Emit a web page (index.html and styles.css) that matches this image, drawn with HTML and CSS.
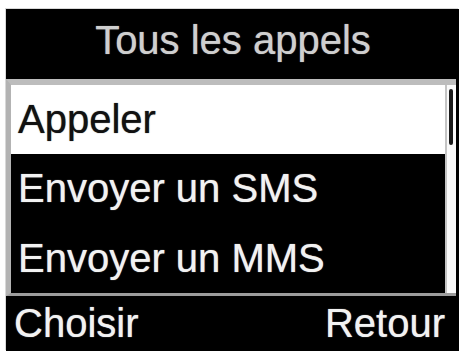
FILE: index.html
```html
<!DOCTYPE html>
<html lang="fr">
<head>
<meta charset="utf-8">
<title>Tous les appels</title>
<link rel="stylesheet" href="styles.css">
</head>
<body>
<div class="screen">
  <div class="header">Tous les appels</div>
  <div class="frame">
    <ul class="menu">
      <li class="item selected">Appeler</li>
      <li class="item">Envoyer un SMS</li>
      <li class="item">Envoyer un MMS</li>
    </ul>
    <div class="scrollbar"><div class="thumb"></div></div>
  </div>
  <div class="softkeys">
    <span class="key">Choisir</span>
    <span class="key">Retour</span>
  </div>
</div>
</body>
</html>
```

FILE: styles.css
```css
html, body {
  margin: 0;
  padding: 0;
  background: #ffffff;
}

body {
  width: 459px;
  height: 351px;
  overflow: hidden;
  font-family: "Liberation Sans", Arial, sans-serif;
}

.screen {
  margin: 9px 0 0 6px;
  height: 342px;
  background: #000;
  display: flex;
  flex-direction: column;
  box-shadow: -1px -1px 0 #d8d8d8;
}

.header {
  height: 70px;
  box-sizing: border-box;
  padding-bottom: 8px;
  line-height: 62px;
  text-align: center;
  color: #cfcfcf;
  font-size: 40px;
  padding-left: 1px;
  text-shadow: 0 0 1px #9a9a9a;
}

.frame {
  display: flex;
  height: 217px;
  box-sizing: border-box;
  margin-right: 3px;
  border-top: 6px solid #bdbdbd;
  border-left: 5px solid #b3b3b3;
  border-bottom: 3px solid #9c9c9c;
}

.menu {
  list-style: none;
  margin: 0;
  padding: 0;
  flex: 1;
  display: flex;
  flex-direction: column;
}

.item {
  flex: 1;
  line-height: 69px;
  font-size: 40px;
  padding-left: 7px;
  color: #f2f2f2;
  white-space: nowrap;
  text-shadow: 0 0 1px #bdbdbd;
}

.item.selected {
  background: #ffffff;
  color: #111;
  text-shadow: 0 0 1px #444;
}

.scrollbar {
  width: 9px;
  border-left: 2px solid #c4c4c4;
  background: #fafafa;
}

.thumb {
  margin: 4px 0 0 2px;
  width: 4px;
  height: 56px;
  border-radius: 2px;
  background: #1a1a1a;
}

.softkeys {
  flex: 1;
  display: flex;
  justify-content: space-between;
  padding: 0 14px 0 8px;
  line-height: 55px;
  font-size: 40px;
  color: #f2f2f2;
  text-shadow: 0 0 1px #bdbdbd;
}
```
